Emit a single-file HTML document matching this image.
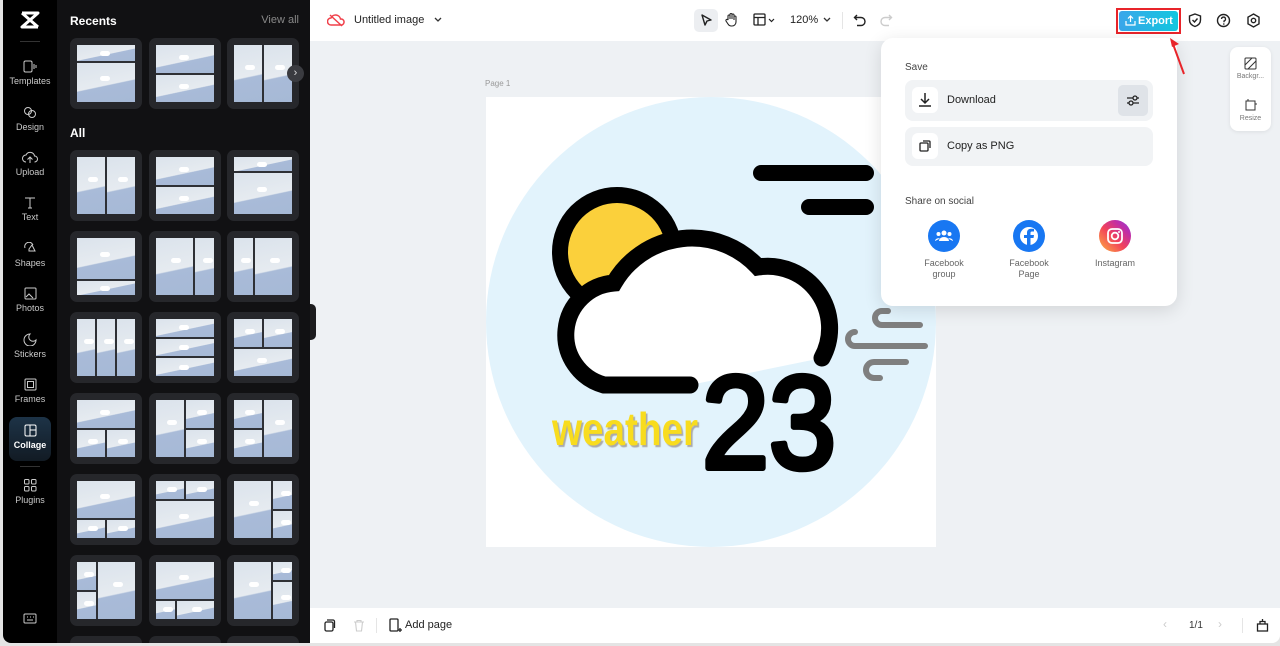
<!DOCTYPE html>
<html><head><meta charset="utf-8">
<style>
*{box-sizing:border-box;margin:0;padding:0}
html,body{overflow:hidden}
body{width:1280px;height:646px;background:#e4e4e4;font-family:"Liberation Sans",sans-serif;position:relative;overflow:hidden}
.app{position:absolute;left:3px;top:0;width:1277px;height:643px;border-radius:0 0 8px 8px;overflow:hidden;background:#eef1f4}
.rail{position:absolute;left:0;top:0;width:54px;height:643px;background:#000}
.panel{position:absolute;left:54px;top:0;width:253px;height:643px;background:#111113}
.ri{position:absolute;left:0;width:54px;text-align:center;color:#c9c9c9;font-size:9px}
.ri svg{display:block;margin:0 auto 3px}
.card{position:absolute;width:72px;height:71px;background:#26272b;border-radius:7px;padding:7px}
.in{width:100%;height:100%;background:#2e3035;display:flex;gap:2px}
.c{flex:1;background:linear-gradient(168deg,#dbe3ec 0,#e6ebf0 55%,#a9bbd8 57%,#a6b9d6 100%);position:relative}
.c::after{content:"";position:absolute;left:40%;top:35%;width:10px;height:5px;background:#fff;border-radius:4px}
.col{flex-direction:row}.row{flex-direction:column}
.sub{display:flex;gap:2px}
.top{position:absolute;left:307px;top:0;right:0;height:41px;background:#fff}
.bot{position:absolute;left:307px;top:608px;right:0;height:35px;background:#fff}
.pop{position:absolute;left:878px;top:38px;width:296px;height:268px;background:#fff;border-radius:12px;box-shadow:0 4px 18px rgba(0,0,0,.12)}
.rowb{position:absolute;left:24px;width:248px;background:#f1f3f5;border-radius:8px}
.ib{position:absolute;left:7px;top:7px;width:26px;height:26px;background:#fff;border-radius:6px}
.lbl{position:absolute;font-size:9px;color:#666;text-align:center;width:60px;line-height:11px}
.soc{position:absolute;width:32px;height:32px;border-radius:50%;top:182px}
</style></head><body>
<div class="app">
<div class="rail">
 <svg style="position:absolute;left:17px;top:11px" width="20" height="18" viewBox="0 0 20 18"><path d="M2 2h16L2 16h16M2 2l16 14" stroke="#fff" stroke-width="3" fill="none" stroke-linejoin="round"/></svg>
 <div style="position:absolute;left:17px;top:41px;width:20px;height:1px;background:#333"></div>
 <div class="ri" style="top:60px"><svg width="14" height="13"><rect x="1" y="1" width="8" height="11" rx="1.5" stroke="#ccc" fill="none"/><path d="M11 4v5M13 5v3" stroke="#ccc"/></svg>Templates</div>
 <div class="ri" style="top:106px"><svg width="14" height="13"><circle cx="5" cy="5" r="3.5" stroke="#ccc" fill="none"/><circle cx="9" cy="8" r="3.5" stroke="#ccc" fill="none"/></svg>Design</div>
 <div class="ri" style="top:151px"><svg width="16" height="13"><path d="M4 11a3.5 3.5 0 0 1 0-7a4.5 4.5 0 0 1 8.5 1a3 3 0 0 1 0 6M8 12V6M5.5 8.5L8 6l2.5 2.5" stroke="#ccc" fill="none"/></svg>Upload</div>
 <div class="ri" style="top:196px"><svg width="14" height="13"><path d="M2 2h10M7 2v10M5 12h4" stroke="#ccc" fill="none"/></svg>Text</div>
 <div class="ri" style="top:242px"><svg width="14" height="13"><path d="M2 6a4 4 0 0 1 8 -3M6 7l3 -4l3 6h-6z" stroke="#ccc" fill="none"/></svg>Shapes</div>
 <div class="ri" style="top:287px"><svg width="14" height="13"><rect x="2" y="1" width="11" height="11" rx="1" stroke="#ccc" fill="none"/><path d="M3 10l3-3l4 4" stroke="#ccc" fill="none"/></svg>Photos</div>
 <div class="ri" style="top:333px"><svg width="14" height="13"><path d="M7 1a6 6 0 1 0 6 6a4 4 0 0 1-6-6z" stroke="#ccc" fill="none"/></svg>Stickers</div>
 <div class="ri" style="top:378px"><svg width="14" height="13"><rect x="2" y="1" width="11" height="11" rx="1" stroke="#ccc" fill="none"/><rect x="4.5" y="3.5" width="6" height="6" stroke="#ccc" fill="none"/></svg>Frames</div>
 <div style="position:absolute;left:6px;top:417px;width:42px;height:44px;border-radius:8px;background:linear-gradient(180deg,#1d3347,#121b24)"></div>
 <div class="ri" style="top:424px;color:#fff;font-weight:bold"><svg width="14" height="13"><rect x="2" y="1" width="11" height="11" rx="1.5" stroke="#fff" fill="none"/><path d="M7 1v11M7 6h6" stroke="#fff"/></svg>Collage</div>
 <div style="position:absolute;left:17px;top:466px;width:20px;height:1px;background:#333"></div>
 <div class="ri" style="top:478px"><svg width="14" height="14"><rect x="1.5" y="1.5" width="4.5" height="4.5" rx="1" stroke="#ccc" fill="none"/><rect x="8.5" y="1.5" width="4.5" height="4.5" rx="1" stroke="#ccc" fill="none"/><rect x="1.5" y="8.5" width="4.5" height="4.5" rx="1" stroke="#ccc" fill="none"/><rect x="8.5" y="8.5" width="4.5" height="4.5" rx="1" stroke="#ccc" fill="none"/></svg>Plugins</div>
 <svg style="position:absolute;left:20px;top:613px" width="14" height="12"><rect x="1" y="1" width="12" height="9" rx="1" stroke="#ccc" fill="none"/><path d="M4 4h1M7 4h1M10 4h1M4 7h6" stroke="#ccc"/></svg>
</div>
<div class="panel">
 <div style="position:absolute;left:13px;top:14px;color:#fff;font-weight:bold;font-size:12px">Recents</div>
 <div style="position:absolute;right:11px;top:14px;color:#888;font-size:11px">View all</div>
 <div style="position:absolute;left:13px;top:126px;color:#fff;font-weight:bold;font-size:12px">All</div>
</div>
<div class="card" style="left:67px;top:38px"><div class="in row"><div class="c" style="flex:1"></div><div class="c" style="flex:2.5"></div></div></div>
<div class="card" style="left:146px;top:38px"><div class="in row"><div class="c"></div><div class="c"></div></div></div>
<div class="card" style="left:224px;top:38px"><div class="in col"><div class="c"></div><div class="c"></div></div></div>
<div style="position:absolute;left:284px;top:65px;width:17px;height:17px;border-radius:50%;background:#3a3b40;color:#ddd;font-size:11px;text-align:center;line-height:16px">›</div>

<div class="card" style="left:67px;top:150px"><div class="in col"><div class="c"></div><div class="c"></div></div></div>
<div class="card" style="left:146px;top:150px"><div class="in row"><div class="c"></div><div class="c"></div></div></div>
<div class="card" style="left:224px;top:150px"><div class="in row"><div class="c" style="flex:1"></div><div class="c" style="flex:3"></div></div></div>

<div class="card" style="left:67px;top:231px"><div class="in row"><div class="c" style="flex:3"></div><div class="c" style="flex:1"></div></div></div>
<div class="card" style="left:146px;top:231px"><div class="in col"><div class="c" style="flex:2"></div><div class="c" style="flex:1"></div></div></div>
<div class="card" style="left:224px;top:231px"><div class="in col"><div class="c" style="flex:1"></div><div class="c" style="flex:2"></div></div></div>

<div class="card" style="left:67px;top:312px"><div class="in col"><div class="c"></div><div class="c"></div><div class="c"></div></div></div>
<div class="card" style="left:146px;top:312px"><div class="in row"><div class="c"></div><div class="c"></div><div class="c"></div></div></div>
<div class="card" style="left:224px;top:312px"><div class="in row"><div class="sub" style="flex:1"><div class="c"></div><div class="c"></div></div><div class="c" style="flex:1"></div></div></div>

<div class="card" style="left:67px;top:393px"><div class="in row"><div class="c"></div><div class="sub" style="flex:1"><div class="c"></div><div class="c"></div></div></div></div>
<div class="card" style="left:146px;top:393px"><div class="in col"><div class="c"></div><div class="sub" style="flex:1;flex-direction:column"><div class="c"></div><div class="c"></div></div></div></div>
<div class="card" style="left:224px;top:393px"><div class="in col"><div class="sub" style="flex:1;flex-direction:column"><div class="c"></div><div class="c"></div></div><div class="c"></div></div></div>

<div class="card" style="left:67px;top:474px"><div class="in row"><div class="c" style="flex:2"></div><div class="sub" style="flex:1"><div class="c"></div><div class="c"></div></div></div></div>
<div class="card" style="left:146px;top:474px"><div class="in row"><div class="sub" style="flex:1"><div class="c"></div><div class="c"></div></div><div class="c" style="flex:2"></div></div></div>
<div class="card" style="left:224px;top:474px"><div class="in col"><div class="c" style="flex:2"></div><div class="sub" style="flex:1;flex-direction:column"><div class="c"></div><div class="c"></div></div></div></div>

<div class="card" style="left:67px;top:555px"><div class="in col"><div class="sub" style="flex:1;flex-direction:column"><div class="c"></div><div class="c"></div></div><div class="c" style="flex:2"></div></div></div>
<div class="card" style="left:146px;top:555px"><div class="in row"><div class="c" style="flex:2"></div><div class="sub" style="flex:1"><div class="c"></div><div class="c" style="flex:2"></div></div></div></div>
<div class="card" style="left:224px;top:555px"><div class="in col"><div class="c" style="flex:2"></div><div class="sub" style="flex:1;flex-direction:column"><div class="c" style="flex:1"></div><div class="c" style="flex:2"></div></div></div></div>

<div class="card" style="left:67px;top:636px;height:7px;border-radius:7px 7px 0 0"></div>
<div class="card" style="left:146px;top:636px;height:7px;border-radius:7px 7px 0 0"></div>
<div class="card" style="left:224px;top:636px;height:7px;border-radius:7px 7px 0 0"></div>
<div style="position:absolute;left:307px;top:304px;width:6px;height:36px;background:#1c1c1e;border-radius:0 5px 5px 0"></div>

<div class="top">
 <svg style="position:absolute;left:17px;top:13px" width="18" height="14"><path d="M4 12a3.5 3.5 0 0 1 0-7a5 5 0 0 1 9.5 1a3 3 0 0 1 1 6zM3 2l12 11" stroke="#f0404a" stroke-width="1.5" fill="none"/></svg>
 <div style="position:absolute;left:44px;top:14px;font-size:11px;color:#222">Untitled image</div>
 <svg style="position:absolute;left:123px;top:15px" width="10" height="10"><path d="M2 3l3 3l3-3" stroke="#333" stroke-width="1.3" fill="none"/></svg>
 <div style="position:absolute;left:384px;top:9px;width:24px;height:23px;background:#eceef1;border-radius:5px"></div>
 <svg style="position:absolute;left:389px;top:13px" width="14" height="14"><path d="M3 2l9 5l-4 1l-2 4z" stroke="#222" stroke-width="1.4" fill="none" stroke-linejoin="round"/></svg>
 <svg style="position:absolute;left:414px;top:12px" width="14" height="15"><path d="M4 8V4a1 1 0 0 1 2 0v3V2.5a1 1 0 0 1 2 0V7V3a1 1 0 0 1 2 0v5V5a1 1 0 0 1 2 0v5a4 4 0 0 1-4 4h-1a4 4 0 0 1-3-2L2 9a1 1 0 0 1 2-1z" stroke="#222" stroke-width="1.1" fill="none"/></svg>
 <svg style="position:absolute;left:443px;top:13px" width="24" height="14"><rect x="1" y="1" width="11" height="11" rx="1" stroke="#222" stroke-width="1.3" fill="none"/><path d="M1 4.5h11M5 4.5V12" stroke="#222" stroke-width="1.3"/><path d="M16 6l2.5 2.5L21 6" stroke="#222" stroke-width="1.2" fill="none"/></svg>
 <div style="position:absolute;left:480px;top:14px;font-size:11px;color:#222">120%</div>
 <svg style="position:absolute;left:512px;top:15px" width="10" height="10"><path d="M2 3l3 3l3-3" stroke="#333" stroke-width="1.3" fill="none"/></svg>
 <div style="position:absolute;left:532px;top:12px;width:1px;height:17px;background:#e5e5e5"></div>
 <svg style="position:absolute;left:543px;top:13px" width="14" height="14"><path d="M4 2L1.5 4.5L4 7M2 4.5h6a4 4 0 0 1 0 8H4" stroke="#222" stroke-width="1.4" fill="none"/></svg>
 <svg style="position:absolute;left:569px;top:13px" width="14" height="14"><path d="M10 2l2.5 2.5L10 7M12 4.5H6a4 4 0 0 0 0 8h4" stroke="#ccc" stroke-width="1.4" fill="none"/></svg>
 <div style="position:absolute;left:806px;top:8px;width:65px;height:26px;border:2px solid #e8242a"></div>
 <div style="position:absolute;left:809px;top:11px;width:59px;height:20px;background:linear-gradient(90deg,#3aa6ea,#12c7df);border-radius:3px;color:#fff;font-size:11px;font-weight:bold;line-height:20px;padding-left:19px">Export</div>
 <svg style="position:absolute;left:815px;top:15px" width="11" height="11"><path d="M5.5 7V1M3 3.5L5.5 1L8 3.5M1 6v4h9V6" stroke="#fff" stroke-width="1.2" fill="none"/></svg>
 <svg style="position:absolute;left:878px;top:13px" width="14" height="15"><path d="M7 1l5.5 2v4c0 3.5-2.5 5.5-5.5 6.5C4 12.5 1.5 10.5 1.5 7V3z" stroke="#222" stroke-width="1.4" fill="none"/><path d="M4.5 7l2 2l3-3.5" stroke="#222" stroke-width="1.4" fill="none"/></svg>
 <svg style="position:absolute;left:906px;top:13px" width="15" height="15"><circle cx="7.5" cy="7.5" r="6" stroke="#222" stroke-width="1.4" fill="none"/><path d="M5.5 6a2 2 0 1 1 2.5 2v1.3" stroke="#222" stroke-width="1.3" fill="none"/><circle cx="7.8" cy="11" r=".8" fill="#222"/></svg>
 <svg style="position:absolute;left:936px;top:13px" width="15" height="15"><path d="M7.5 1l5.5 3.2v6.6L7.5 14L2 10.8V4.2z" stroke="#222" stroke-width="1.4" fill="none"/><circle cx="7.5" cy="7.5" r="2.2" stroke="#222" stroke-width="1.4" fill="none"/></svg>
</div>

<div style="position:absolute;left:482px;top:79px;font-size:8px;color:#999">Page 1</div>
<svg style="position:absolute;left:483px;top:97px" width="450" height="450" viewBox="486 97 450 450">
 <rect x="486" y="97" width="450" height="450" fill="#fff"/>
 <circle cx="711" cy="322" r="225" fill="#e2f3fc"/>
 <line x1="761" y1="173" x2="866" y2="173" stroke="#000" stroke-width="16" stroke-linecap="round"/>
 <line x1="809" y1="207" x2="866" y2="207" stroke="#000" stroke-width="16" stroke-linecap="round"/>
 <circle cx="617" cy="252" r="57" fill="#fbd03b" stroke="#000" stroke-width="16"/>
 <path d="M690 385H604A52 52 0 0 1 614 283A90 90 0 0 1 758 267A62 62 0 0 1 822 358" fill="#fff" stroke="#000" stroke-width="17" stroke-linecap="round"/>
 <g stroke="#7f7f7f" stroke-width="6" fill="none" stroke-linecap="round">
  <path d="M920 325H882a7 7 0 0 1 0-14h6"/>
  <path d="M925 346H855a7 7 0 0 1 0-14"/>
  <path d="M906 362H874a8 8 0 0 0 0 16h6"/>
 </g>
 <text x="702" y="468" font-family="Liberation Sans,sans-serif" font-size="132" fill="#000" stroke="#000" stroke-width="6" stroke-linejoin="round" textLength="134" lengthAdjust="spacingAndGlyphs">23</text>
 <text x="552" y="445" font-family="Liberation Sans,sans-serif" font-weight="bold" font-size="46" fill="#f8dc1e" textLength="146" lengthAdjust="spacingAndGlyphs" style="text-shadow:2px 2px 1px #aaa">weather</text>
</svg>

<div class="pop">
 <div style="position:absolute;left:24px;top:24px;font-size:10px;color:#444">Save</div>
 <div class="rowb" style="top:42px;height:41px"><div class="ib"><svg width="26" height="26"><path d="M13 6v10M9 12l4 4l4-4M7 19h12" stroke="#222" stroke-width="1.5" fill="none"/></svg></div>
  <div style="position:absolute;left:42px;top:14px;font-size:11px;color:#222">Download</div>
  <div style="position:absolute;left:213px;top:5px;width:30px;height:31px;background:#dfe3e8;border-radius:5px"><svg width="30" height="31"><path d="M9 13h12M9 18h12" stroke="#222" stroke-width="1.3"/><circle cx="17" cy="13" r="2" fill="#dfe3e8" stroke="#222" stroke-width="1.3"/><circle cx="13" cy="18" r="2" fill="#dfe3e8" stroke="#222" stroke-width="1.3"/></svg></div>
 </div>
 <div class="rowb" style="top:89px;height:39px"><div class="ib" style="top:6px"><svg width="26" height="26"><rect x="8" y="10" width="8" height="8" rx="1" stroke="#222" stroke-width="1.3" fill="none"/><path d="M11 8h6a1 1 0 0 1 1 1v6" stroke="#222" stroke-width="1.3" fill="none"/></svg></div>
  <div style="position:absolute;left:42px;top:13px;font-size:11px;color:#222">Copy as PNG</div></div>
 <div style="position:absolute;left:24px;top:158px;font-size:10px;color:#444">Share on social</div>
 <div class="soc" style="left:47px;background:#1877f2"><svg width="32" height="32"><circle cx="16" cy="13" r="2.5" fill="#fff"/><circle cx="10.5" cy="14" r="2" fill="#fff"/><circle cx="21.5" cy="14" r="2" fill="#fff"/><path d="M11 21a5 4 0 0 1 10 0zM7 21a3.5 3 0 0 1 5-2.5M25 21a3.5 3 0 0 0-5-2.5" fill="#fff"/></svg></div>
 <div class="soc" style="left:132px;background:#1877f2"><svg width="32" height="32"><circle cx="16" cy="16" r="9" fill="#fff"/><path d="M17.5 27V18h3l.5-3h-3.5v-2c0-1 .4-1.5 1.5-1.5h2V9c-1-.2-2-.2-3-.2c-2.5 0-4 1.5-4 4V15h-3v3h3v9z" fill="#1877f2"/></svg></div>
 <div class="soc" style="left:218px;background:linear-gradient(45deg,#fdb43f,#f2435a 45%,#c02ea6 75%,#8a3ee0)"><svg width="32" height="32"><rect x="9" y="9" width="14" height="14" rx="4" stroke="#fff" stroke-width="1.8" fill="none"/><circle cx="16" cy="16" r="3.3" stroke="#fff" stroke-width="1.8" fill="none"/><circle cx="20" cy="12" r="1" fill="#fff"/></svg></div>
 <div class="lbl" style="left:33px;top:220px">Facebook<br>group</div>
 <div class="lbl" style="left:118px;top:220px">Facebook<br>Page</div>
 <div class="lbl" style="left:204px;top:220px">Instagram</div>
</div>
<svg style="position:absolute;left:1160px;top:34px" width="30" height="44"><path d="M21 40L10 10" stroke="#e8242a" stroke-width="2"/><path d="M7 4l9 6l-7 3z" fill="#e8242a"/></svg>

<div style="position:absolute;left:1227px;top:47px;width:41px;height:84px;background:#fff;border-radius:8px;box-shadow:0 1px 4px rgba(0,0,0,.08)">
 <svg style="position:absolute;left:14px;top:10px" width="13" height="13"><rect x="1" y="1" width="11" height="11" rx="1" stroke="#333" fill="none"/><path d="M1 8l7-7M4 12l8-8" stroke="#333"/></svg>
 <div style="position:absolute;left:0;top:26px;width:41px;text-align:center;font-size:7px;color:#777">Backgr...</div>
 <svg style="position:absolute;left:14px;top:51px" width="13" height="13"><rect x="2" y="3" width="9" height="9" stroke="#333" fill="none"/><path d="M4 1v2M11 6h2" stroke="#333"/></svg>
 <div style="position:absolute;left:0;top:68px;width:41px;text-align:center;font-size:7px;color:#777">Resize</div>
</div>

<div class="bot">
 <svg style="position:absolute;left:13px;top:11px" width="13" height="13"><rect x="2" y="3" width="8" height="9" rx="1.5" stroke="#222" stroke-width="1.3" fill="none"/><path d="M4 1h6a1.5 1.5 0 0 1 1.5 1.5V9" stroke="#222" stroke-width="1.3" fill="none"/></svg>
 <svg style="position:absolute;left:43px;top:11px" width="12" height="13"><path d="M1 3h10M4 3V1.5h4V3M2.5 3l1 9h5l1-9" stroke="#ccc" stroke-width="1.1" fill="none"/></svg>
 <div style="position:absolute;left:66px;top:10px;width:1px;height:15px;background:#e5e5e5"></div>
 <svg style="position:absolute;left:78px;top:10px" width="14" height="15"><rect x="2" y="1" width="8" height="12" rx="1" stroke="#222" stroke-width="1.3" fill="none"/><path d="M10 12h4M12 10v4" stroke="#222" stroke-width="1.3"/></svg>
 <div style="position:absolute;left:95px;top:11px;font-size:11px;color:#222">Add page</div>
 <div style="position:absolute;left:853px;top:9px;font-size:12px;color:#ccc">‹</div>
 <div style="position:absolute;left:879px;top:12px;font-size:10px;color:#333">1/1</div>
 <div style="position:absolute;left:908px;top:9px;font-size:12px;color:#ccc">›</div>
 <div style="position:absolute;left:932px;top:10px;width:1px;height:15px;background:#e5e5e5"></div>
 <svg style="position:absolute;left:946px;top:10px" width="13" height="15"><rect x="1.5" y="6" width="10" height="7" stroke="#222" stroke-width="1.3" fill="none"/><path d="M4 6V3.5h5V6M6.5 1v2" stroke="#222" stroke-width="1.3" fill="none"/></svg>
</div>
</div>
</body></html>
